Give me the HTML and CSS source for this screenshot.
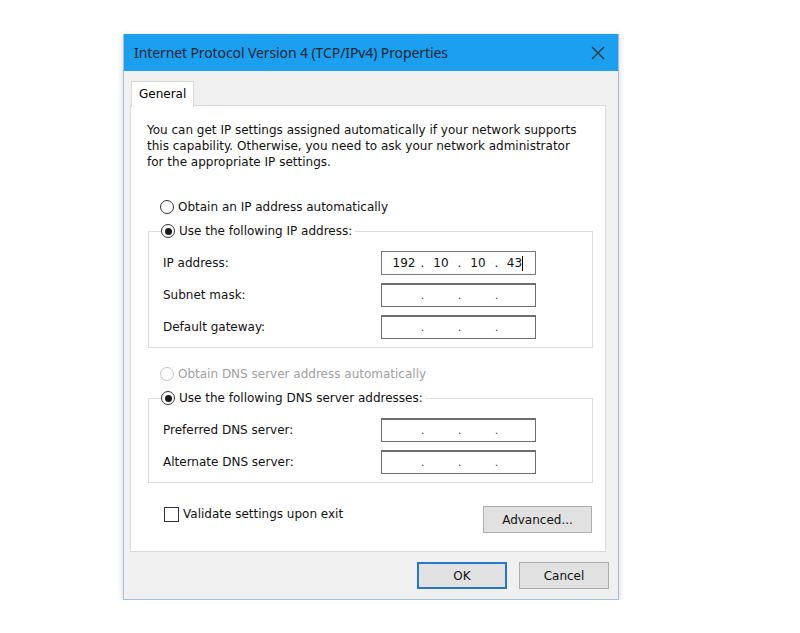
FILE: index.html
```html
<!DOCTYPE html>
<html lang="en">
<head>
    <title>Internet Protocol Version 4 (TCP/IPv4) Properties</title>
    <link rel="stylesheet" href="styles.css">
</head>
<body>
    <div class="window">
        <div class="titlebar">
            <span class="title">Internet Protocol Version 4 (TCP/IPv4) Properties</span>
            <svg class="close" width="14" height="14" viewBox="0 0 14 14">
                <path d="M1 1 L13 13 M13 1 L1 13" stroke="#2a3440" stroke-width="1.3" fill="none"/>
            </svg>
        </div>

        <div class="dialog">
            <div class="tabs">
                <div class="tab">General</div>
            </div>

            <div class="panel">
                <p class="intro">You can get IP settings assigned automatically if your network supports this capability. Otherwise, you need to ask your network administrator for the appropriate IP settings.</p>

                <div class="radio-row">
                    <span class="radio"></span>Obtain an IP address automatically
                </div>

                <fieldset class="group">
                    <legend><span class="radio checked"></span>Use the following IP address:</legend>
                    <div class="field-row">
                        <span>IP address:</span>
                        <div class="ipbox">
                            <span class="octet">192</span><span class="dot">.</span><span class="octet">10</span><span class="dot">.</span><span class="octet">10</span><span class="dot">.</span><span class="octet">43<span class="caret"></span></span>
                        </div>
                    </div>
                    <div class="field-row">
                        <span>Subnet mask:</span>
                        <div class="ipbox empty">
                            <span class="octet"></span><span class="dot">.</span><span class="octet"></span><span class="dot">.</span><span class="octet"></span><span class="dot">.</span><span class="octet"></span>
                        </div>
                    </div>
                    <div class="field-row">
                        <span>Default gateway:</span>
                        <div class="ipbox empty">
                            <span class="octet"></span><span class="dot">.</span><span class="octet"></span><span class="dot">.</span><span class="octet"></span><span class="dot">.</span><span class="octet"></span>
                        </div>
                    </div>
                </fieldset>

                <div class="radio-row disabled dns-auto">
                    <span class="radio"></span>Obtain DNS server address automatically
                </div>

                <fieldset class="group dns">
                    <legend><span class="radio checked"></span>Use the following DNS server addresses:</legend>
                    <div class="field-row">
                        <span>Preferred DNS server:</span>
                        <div class="ipbox empty">
                            <span class="octet"></span><span class="dot">.</span><span class="octet"></span><span class="dot">.</span><span class="octet"></span><span class="dot">.</span><span class="octet"></span>
                        </div>
                    </div>
                    <div class="field-row">
                        <span>Alternate DNS server:</span>
                        <div class="ipbox empty">
                            <span class="octet"></span><span class="dot">.</span><span class="octet"></span><span class="dot">.</span><span class="octet"></span><span class="dot">.</span><span class="octet"></span>
                        </div>
                    </div>
                </fieldset>

                <div class="bottom-row">
                    <label class="check"><span class="box"></span>Validate settings upon exit</label>
                    <button class="btn">Advanced...</button>
                </div>
            </div>

            <div class="actions">
                <button class="btn default">OK</button>
                <button class="btn">Cancel</button>
            </div>
        </div>
    </div>
</body>
</html>
```

FILE: styles.css
```css
body {
    margin: 0;
    background: #fff;
    font-family: 'DejaVu Sans', Verdana, sans-serif;
    font-size: 12px;
    color: #111;
}
.window {
    width: 494px;
    margin: 34px 0 0 123px;
    border: 1px solid #a7bfd6;
    border-top: none;
    box-shadow: 0 1px 6px rgba(0, 0, 0, 0.18);
}
.titlebar {
    height: 37px;
    background: #1d9ff0;
    display: flex;
    align-items: center;
    justify-content: space-between;
    padding: 0 13px 0 10px;
}
.title {
    font-family: 'Noto Sans', 'Open Sans', sans-serif;
    font-size: 14px;
    color: #1b2633;
    letter-spacing: -0.1px;
}
.close {
    display: block;
}
.dialog {
    background: #f0f0f0;
    padding: 9px 9px 10px 6px;
}
.tabs {
    display: flex;
    height: 25px;
    padding-left: 1px;
}
.tab {
    background: #fff;
    border: 1px solid #d9d9d9;
    border-bottom: none;
    padding: 5px 7px 0 7px;
    height: 20px;
    position: relative;
    top: 1px;
    color: #000;
}
.panel {
    background: #fff;
    border: 1px solid #d9d9d9;
    margin-right: 3px;
    padding: 16px 12px 18px 16px;
}
.intro {
    margin: 0;
    line-height: 16px;
    width: 434px;
}
.radio-row {
    display: flex;
    align-items: center;
    height: 16px;
    margin: 29px 0 0 13px;
}
.radio-row.dns-auto {
    margin-top: 18px;
}
.radio {
    width: 12px;
    height: 12px;
    border: 1px solid #333;
    border-radius: 50%;
    margin-right: 4px;
    display: inline-flex;
    align-items: center;
    justify-content: center;
    background: #fff;
    flex-shrink: 0;
}
.radio.checked::after {
    content: "";
    width: 7px;
    height: 7px;
    border-radius: 50%;
    background: #1a1a1a;
}
.disabled {
    color: #a0a0a0;
}
.disabled .radio {
    border-color: #c4c4c4;
}
.group {
    margin: 8px 0 0 1px;
    padding: 4px 56px 8px 14px;
    border: 1px solid #dcdcdc;
    min-width: 0;
}
.group legend {
    display: flex;
    align-items: center;
    height: 16px;
    padding: 0 3px 0 0;
    margin-left: -2px;
}
.field-row {
    display: flex;
    align-items: center;
    justify-content: space-between;
    margin-top: 8px;
}
.ipbox {
    width: 146px;
    height: 22px;
    border: 1px solid #7a7a7a;
    display: flex;
    align-items: center;
    padding-left: 7px;
    box-sizing: content-box;
}
.ipbox.empty {
    border-color: #6e6e6e;
    border-top-width: 2px;
    height: 21px;
}
.octet {
    width: 30px;
    text-align: center;
    display: inline-flex;
    justify-content: center;
    align-items: center;
}
.dot {
    width: 7px;
    text-align: center;
}
.empty .dot {
    font-size: 10px;
    color: #333;
}
.caret {
    display: inline-block;
    width: 1px;
    height: 15px;
    background: #000;
}
.bottom-row {
    display: flex;
    justify-content: space-between;
    align-items: flex-start;
    margin-top: 23px;
}
.check {
    display: flex;
    align-items: center;
    margin: 0 0 0 17px;
    height: 16px;
}
.box {
    width: 13px;
    height: 13px;
    border: 1px solid #333;
    background: #fff;
    margin-right: 4px;
}
.btn {
    font-family: inherit;
    font-size: 12px;
    color: #111;
    background: #e1e1e1;
    border: 1px solid #adadad;
    height: 27px;
    padding: 0;
}
.bottom-row .btn {
    width: 109px;
    margin-right: 1px;
}
.actions {
    display: flex;
    justify-content: flex-end;
    gap: 12px;
    margin-top: 10px;
}
.actions .btn {
    width: 90px;
}
.btn.default {
    border: 2px solid #2677c9;
}
```
